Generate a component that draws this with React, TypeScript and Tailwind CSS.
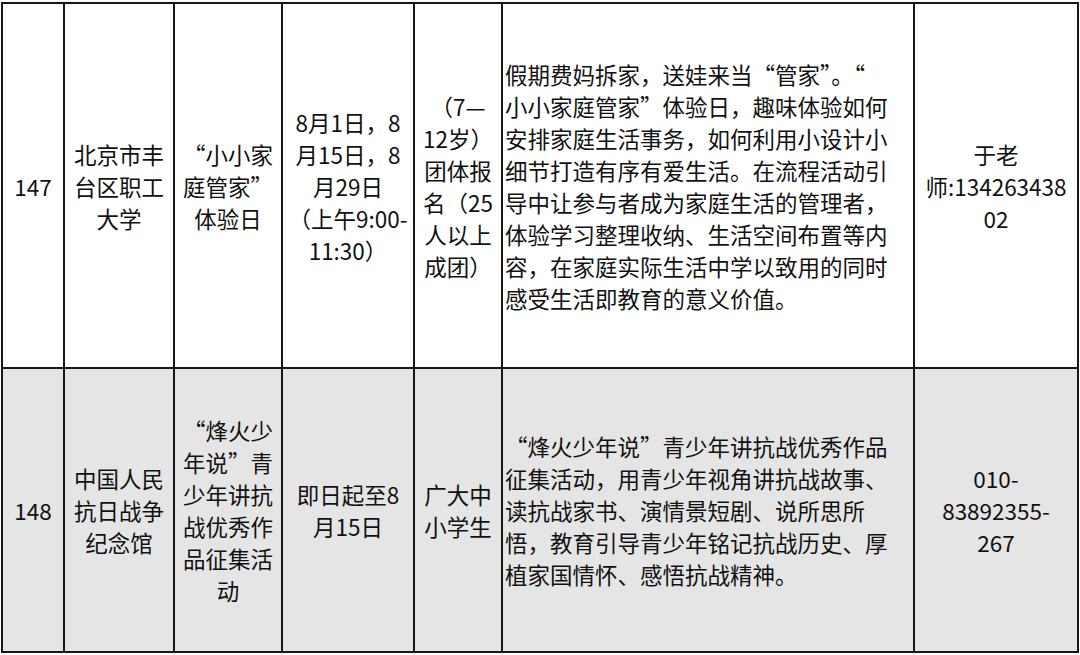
import React from "react";

type Cell = { lines: string[]; align?: "center" | "left" };

const widths = [
  "w-[62px]",
  "w-[110px]",
  "w-[108px]",
  "w-[132px]",
  "w-[88px]",
  "w-[412px]",
  "w-[162px]",
];

const rows: { height: string; bg: string; border: boolean; cells: Cell[] }[] = [
  {
    height: "h-[365px]",
    bg: "bg-white",
    border: true,
    cells: [
      { lines: ["147"] },
      { lines: ["北京市丰", "台区职工", "大学"] },
      { lines: ["“小小家", "庭管家”", "体验日"] },
      { lines: ["8月1日，8", "月15日，8", "月29日", "（上午9:00-", "11:30）"] },
      { lines: ["（7—", "12岁）", "团体报", "名（25", "人以上", "成团）"] },
      {
        align: "left",
        lines: [
          "假期费妈拆家，送娃来当“管家”。“",
          "小小家庭管家”体验日，趣味体验如何",
          "安排家庭生活事务，如何利用小设计小",
          "细节打造有序有爱生活。在流程活动引",
          "导中让参与者成为家庭生活的管理者，",
          "体验学习整理收纳、生活空间布置等内",
          "容，在家庭实际生活中学以致用的同时",
          "感受生活即教育的意义价值。",
        ],
      },
      { lines: ["于老", "师:134263438", "02"] },
    ],
  },
  {
    height: "h-[282px]",
    bg: "bg-[#e5e5e5]",
    border: false,
    cells: [
      { lines: ["148"] },
      { lines: ["中国人民", "抗日战争", "纪念馆"] },
      { lines: ["“烽火少", "年说”青", "少年讲抗", "战优秀作", "品征集活", "动"] },
      { lines: ["即日起至8", "月15日"] },
      { lines: ["广大中", "小学生"] },
      {
        align: "left",
        lines: [
          "“烽火少年说”青少年讲抗战优秀作品",
          "征集活动，用青少年视角讲抗战故事、",
          "读抗战家书、演情景短剧、说所思所",
          "悟，教育引导青少年铭记抗战历史、厚",
          "植家国情怀、感悟抗战精神。",
        ],
      },
      { lines: ["010-", "83892355-", "267"] },
    ],
  },
];

export default function App() {
  return (
    <div className="w-[1080px] h-[655px] bg-white overflow-hidden">
      <div className="ml-[1px] mt-[2px] w-[1078px] border-2 border-[#161616] flex flex-col font-['Noto_Sans_CJK_SC','Noto_Sans_CJK_JP',sans-serif] text-[22.5px] leading-[32px] text-[#111]">
        {rows.map((row, ri) => (
          <div
            key={ri}
            className={`flex ${row.height} ${row.bg} ${row.border ? "border-b-2 border-[#161616]" : ""}`}
          >
            {row.cells.map((cell, ci) => (
              <div
                key={ci}
                className={`${widths[ci]} shrink-0 flex items-center ${
                  ci < 6 ? "border-r-2 border-[#161616]" : ""
                } ${cell.align === "left" ? "justify-start pl-[2px] text-left" : "justify-center text-center"}`}
              >
                <div className="flex flex-col">
                  {cell.lines.map((l, li) => (
                    <span key={li} className="whitespace-nowrap">
                      {l}
                    </span>
                  ))}
                </div>
              </div>
            ))}
          </div>
        ))}
      </div>
    </div>
  );
}
